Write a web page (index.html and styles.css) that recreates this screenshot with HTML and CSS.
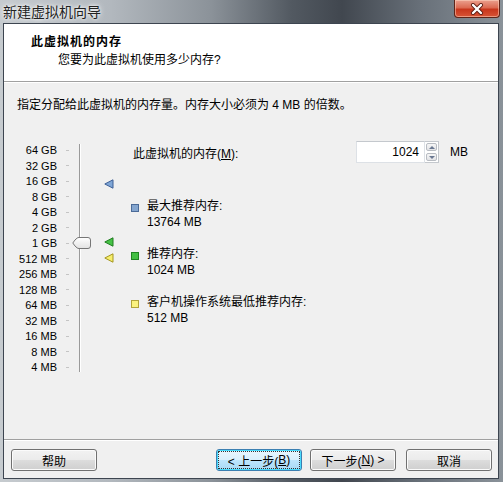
FILE: index.html
```html
<!DOCTYPE html>
<html lang="zh-CN">
<head>
  <meta charset="UTF-8">
  <meta name="viewport" content="width=device-width, initial-scale=1.0">
  <title>新建虚拟机向导</title>
  <link rel="stylesheet" href="styles.css">
</head>
<body>
  <div class="window">
    <!-- 标题栏 -->
    <div class="titlebar">
      <span class="title">新建虚拟机向导</span>
      <div class="close">
        <svg width="14" height="12" viewBox="0 0 14 12">
          <path d="M3 2 L11 10 M11 2 L3 10" stroke="#5a1a10" stroke-width="4" stroke-linecap="round"/>
          <path d="M3 2 L11 10 M11 2 L3 10" stroke="#fff" stroke-width="2.4" stroke-linecap="round"/>
        </svg>
      </div>
    </div>

    <div class="client">
      <!-- 向导头部 -->
      <div class="header">
        <div class="header-title">此虚拟机的内存</div>
        <div class="header-sub">您要为此虚拟机使用多少内存?</div>
      </div>

      <div class="content">
        <p class="intro">指定分配给此虚拟机的内存量。内存大小必须为 4 MB 的倍数。</p>

        <div class="memory">
          <!-- 左侧刻度和滑块 -->
          <div class="scale">
            <ul class="labels">
              <li><span>64 GB</span><i class="tick"></i></li>
              <li><span>32 GB</span><i class="tick"></i></li>
              <li><span>16 GB</span><i class="tick"></i></li>
              <li><span>8 GB</span><i class="tick"></i></li>
              <li><span>4 GB</span><i class="tick"></i></li>
              <li><span>2 GB</span><i class="tick"></i></li>
              <li><span>1 GB</span><i class="tick"></i></li>
              <li><span>512 MB</span><i class="tick"></i></li>
              <li><span>256 MB</span><i class="tick"></i></li>
              <li><span>128 MB</span><i class="tick"></i></li>
              <li><span>64 MB</span><i class="tick"></i></li>
              <li><span>32 MB</span><i class="tick"></i></li>
              <li><span>16 MB</span><i class="tick"></i></li>
              <li><span>8 MB</span><i class="tick"></i></li>
              <li><span>4 MB</span><i class="tick"></i></li>
            </ul>
            <div class="track"></div>
            <svg class="thumb" width="19" height="12" viewBox="0 0 19 12">
              <defs>
                <linearGradient id="tg" x1="0" y1="0" x2="0" y2="1">
                  <stop offset="0" stop-color="#ffffff"/>
                  <stop offset="1" stop-color="#e2e2e2"/>
                </linearGradient>
              </defs>
              <path d="M0.8 6 Q3 2.5 5 1.2 Q5.8 0.5 7 0.5 H16 Q18.5 0.5 18.5 3 V9 Q18.5 11.5 16 11.5 H7 Q5.8 11.5 5 10.8 Q3 9.5 0.8 6 Z" fill="url(#tg)" stroke="#767676"/>
            </svg>
            <!-- 推荐值标记 -->
            <svg class="mark mark-max" width="10" height="10" viewBox="0 0 10 10">
              <polygon points="9,0.8 9,9.2 0.8,5" fill="#7fa6d6" stroke="#3d5f96"/>
            </svg>
            <svg class="mark mark-rec" width="10" height="10" viewBox="0 0 10 10">
              <polygon points="9,0.8 9,9.2 0.8,5" fill="#46c246" stroke="#1f7d1f"/>
            </svg>
            <svg class="mark mark-min" width="10" height="10" viewBox="0 0 10 10">
              <polygon points="9,0.8 9,9.2 0.8,5" fill="#f7ef6c" stroke="#a39520"/>
            </svg>
          </div>

          <!-- 右侧输入和说明 -->
          <div class="panel">
            <div class="size-row">
              <label class="size-label">此虚拟机的内存(<u>M</u>):</label>
              <div class="spin">
                <div class="spin-field">1024</div>
                <div class="spin-buttons">
                  <div class="spin-btn up"></div>
                  <div class="spin-btn down"></div>
                </div>
              </div>
              <span class="unit">MB</span>
            </div>

            <ul class="legend">
              <li class="legend-item">
                <i class="swatch swatch-max"></i>
                <div>
                  <div>最大推荐内存:</div>
                  <div>13764 MB</div>
                </div>
              </li>
              <li class="legend-item">
                <i class="swatch swatch-rec"></i>
                <div>
                  <div>推荐内存:</div>
                  <div>1024 MB</div>
                </div>
              </li>
              <li class="legend-item">
                <i class="swatch swatch-min"></i>
                <div>
                  <div>客户机操作系统最低推荐内存:</div>
                  <div>512 MB</div>
                </div>
              </li>
            </ul>
          </div>
        </div>
      </div>

      <!-- 底部按钮 -->
      <div class="footer">
        <button class="btn">帮助</button>
        <div class="nav">
          <button class="btn btn-default"><span class="focus">&lt; 上一步(<u>B</u>)</span></button>
          <button class="btn">下一步(<u>N</u>) &gt;</button>
          <button class="btn btn-cancel">取消</button>
        </div>
      </div>
    </div>
  </div>
</body>
</html>
```

FILE: styles.css
```css
* {
  margin: 0;
  padding: 0;
  box-sizing: border-box;
  list-style: none;
}

body {
  width: 503px;
  height: 482px;
  overflow: hidden;
  font-family: "Liberation Sans", "Noto Sans CJK SC", sans-serif;
  font-size: 12px;
  color: #000;
}

.window {
  display: flex;
  flex-direction: column;
  height: 482px;
  background: linear-gradient(90deg, #c6cbcf 0%, #b2b8be 22%, #8b9299 42%, #525961 58%, #41474f 68%, #69717a 84%, #8a9299 100%);
}

/* 标题栏 */
.titlebar {
  display: flex;
  justify-content: space-between;
  align-items: flex-start;
  height: 23px;
}

.title {
  padding: 2px 0 0 3px;
  font-family: "Noto Sans CJK SC", sans-serif;
  font-size: 14px;
  line-height: 18px;
  color: #222;
  text-shadow: 0 0 6px #fff, 0 0 3px #fff;
}

.close {
  display: flex;
  justify-content: center;
  align-items: center;
  width: 46px;
  height: 18px;
  margin-right: 3px;
  border: 1px solid #5e2418;
  border-top: none;
  border-radius: 0 0 4px 4px;
  background: linear-gradient(#eba08e 0%, #dc6a52 45%, #c8361c 55%, #d85436 100%);
  box-shadow: inset 0 0 0 1px rgba(255, 220, 200, 0.5);
}

/* 窗口内容 */
.client {
  flex: 1;
  display: flex;
  flex-direction: column;
  margin: 0 4px 3px 3px;
  border: 1px solid #3d4550;
  background-color: #f0f0f0;
}

.header {
  height: 58px;
  padding: 9px 0 0 27px;
  background-color: #fff;
  border-bottom: 1px solid #a0a0a0;
  box-shadow: 0 1px 0 #fff;
}

.header-title {
  font-family: "Noto Sans CJK SC", sans-serif;
  font-weight: bold;
  font-size: 12px;
  line-height: 16px;
  letter-spacing: 1px;
}

.header-sub {
  margin: 3px 0 0 27px;
  line-height: 16px;
}

.content {
  flex: 1;
  padding: 15px 13px 0;
}

.intro {
  line-height: 16px;
}

.memory {
  display: flex;
  margin-top: 28px;
}

/* 刻度 */
.scale {
  position: relative;
  width: 114px;
  height: 234px;
}

.labels {
  display: flex;
  flex-direction: column;
  justify-content: space-between;
  height: 231px;
  margin-top: 2px;
}

.labels li {
  display: flex;
  align-items: center;
  height: 14px;
  font-size: 11px;
  line-height: 14px;
}

.labels span {
  width: 40px;
  text-align: right;
}

.tick {
  width: 3px;
  height: 1px;
  margin-left: 9px;
  background-color: #c4c4c4;
}

.track {
  position: absolute;
  left: 62px;
  top: 3px;
  width: 2px;
  height: 228px;
  border-left: 1px solid #9a9a9a;
  border-right: 1px solid #fff;
}

.thumb {
  position: absolute;
  left: 55px;
  top: 96px;
}

.mark {
  position: absolute;
  left: 87px;
}

.mark-max {
  top: 38px;
}

.mark-rec {
  top: 96px;
}

.mark-min {
  top: 112px;
}

/* 右侧 */
.panel {
  flex: 1;
}

.size-row {
  display: flex;
  align-items: center;
  height: 22px;
}

.size-label {
  width: 225px;
  padding-left: 2px;
}

.spin {
  display: flex;
  width: 83px;
  height: 22px;
}

.spin-field {
  flex: 1;
  padding-right: 5px;
  text-align: right;
  line-height: 20px;
  background-color: #fff;
  border: 1px solid #dde1e6;
  border-top-color: #c4c8cd;
}

.spin-buttons {
  display: flex;
  flex-direction: column;
  width: 14px;
  border: 1px solid #c4c8cd;
  border-left: none;
  background-color: #fff;
}

.spin-btn {
  flex: 1;
  display: flex;
  justify-content: center;
  align-items: center;
  margin: 1px;
  border: 1px solid #b8bcc2;
  border-radius: 2px;
  background: linear-gradient(#f6f6f6, #e2e3e6);
}

.spin-btn::after {
  content: "";
  border-left: 3px solid transparent;
  border-right: 3px solid transparent;
}

.up::after {
  border-bottom: 3px solid #6a7891;
}

.down::after {
  border-top: 3px solid #6a7891;
}

.unit {
  margin-left: 11px;
}

.legend {
  display: flex;
  flex-direction: column;
  gap: 16px;
  margin-top: 35px;
}

.legend-item {
  display: flex;
  line-height: 16px;
}

.swatch {
  width: 8px;
  height: 8px;
  margin: 6px 8px 0 0;
  border: 1px solid;
}

.swatch-max {
  background-color: #85a6cf;
  border-color: #4b6b98;
}

.swatch-rec {
  background-color: #43bf43;
  border-color: #1f8421;
}

.swatch-min {
  background-color: #fbf37f;
  border-color: #b2a43a;
}

/* 底部 */
.footer {
  display: flex;
  justify-content: space-between;
  padding: 9px 6px 7px 7px;
  border-top: 1px solid #a0a0a0;
  box-shadow: inset 0 1px 0 #fff;
}

.nav {
  display: flex;
  gap: 8px;
}

.btn {
  display: flex;
  justify-content: center;
  align-items: center;
  width: 86px;
  height: 22px;
  font-family: "Liberation Sans", "Noto Sans CJK SC", sans-serif;
  font-size: 12px;
  color: #000;
  border: 1px solid #707070;
  border-radius: 3px;
  background: linear-gradient(#f2f2f2 0%, #ebebeb 50%, #dddddd 50%, #cfcfcf 100%);
  box-shadow: inset 0 0 0 1px #fbfbfb;
}

.btn-default {
  border-color: #3c7fb1;
  background: linear-gradient(#eaf6fd 0%, #d9f0fc 50%, #bee6fd 50%, #a7d9f5 100%);
  box-shadow: inset 0 0 0 1px #48dbfc;
}

.focus {
  display: flex;
  justify-content: center;
  align-items: center;
  width: 80px;
  height: 16px;
  outline: 1px dotted #333;
}

.btn-cancel {
  margin-left: 2px;
}
```
